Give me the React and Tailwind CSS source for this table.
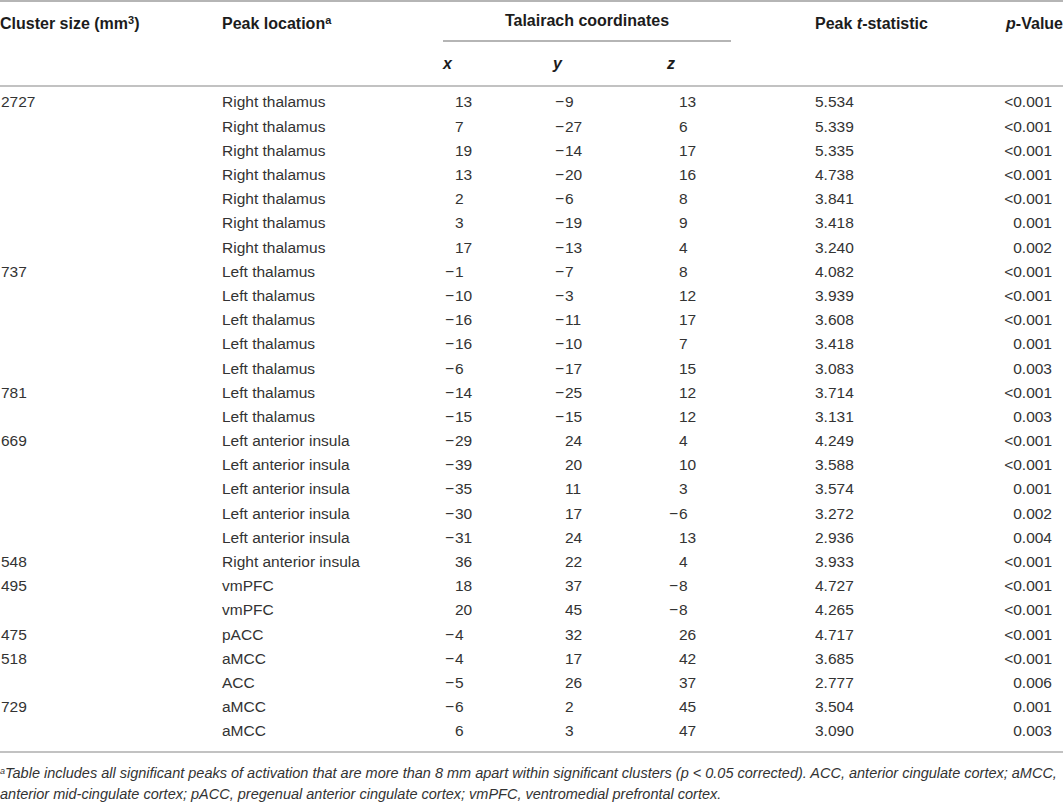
const rows = [
  ['2727', 'Right thalamus', '13', '−9', '13', '5.534', '<0.001'],
  ['', 'Right thalamus', '7', '−27', '6', '5.339', '<0.001'],
  ['', 'Right thalamus', '19', '−14', '17', '5.335', '<0.001'],
  ['', 'Right thalamus', '13', '−20', '16', '4.738', '<0.001'],
  ['', 'Right thalamus', '2', '−6', '8', '3.841', '<0.001'],
  ['', 'Right thalamus', '3', '−19', '9', '3.418', '0.001'],
  ['', 'Right thalamus', '17', '−13', '4', '3.240', '0.002'],
  ['737', 'Left thalamus', '−1', '−7', '8', '4.082', '<0.001'],
  ['', 'Left thalamus', '−10', '−3', '12', '3.939', '<0.001'],
  ['', 'Left thalamus', '−16', '−11', '17', '3.608', '<0.001'],
  ['', 'Left thalamus', '−16', '−10', '7', '3.418', '0.001'],
  ['', 'Left thalamus', '−6', '−17', '15', '3.083', '0.003'],
  ['781', 'Left thalamus', '−14', '−25', '12', '3.714', '<0.001'],
  ['', 'Left thalamus', '−15', '−15', '12', '3.131', '0.003'],
  ['669', 'Left anterior insula', '−29', '24', '4', '4.249', '<0.001'],
  ['', 'Left anterior insula', '−39', '20', '10', '3.588', '<0.001'],
  ['', 'Left anterior insula', '−35', '11', '3', '3.574', '0.001'],
  ['', 'Left anterior insula', '−30', '17', '−6', '3.272', '0.002'],
  ['', 'Left anterior insula', '−31', '24', '13', '2.936', '0.004'],
  ['548', 'Right anterior insula', '36', '22', '4', '3.933', '<0.001'],
  ['495', 'vmPFC', '18', '37', '−8', '4.727', '<0.001'],
  ['', 'vmPFC', '20', '45', '−8', '4.265', '<0.001'],
  ['475', 'pACC', '−4', '32', '26', '4.717', '<0.001'],
  ['518', 'aMCC', '−4', '17', '42', '3.685', '<0.001'],
  ['', 'ACC', '−5', '26', '37', '2.777', '0.006'],
  ['729', 'aMCC', '−6', '2', '45', '3.504', '0.001'],
  ['', 'aMCC', '6', '3', '47', '3.090', '0.003'],
];

const cols = 'grid grid-cols-[222px_221px_110px_114px_148px_147px_1fr]';

// minus sign hangs in a fixed slot so digits line up
function Coord({ v }) {
  const neg = v.startsWith('−');
  return (
    <span className="flex">
      <span className="w-[12px] text-right pr-[1px]">{neg ? '−' : ''}</span>
      <span>{neg ? v.slice(1) : v}</span>
    </span>
  );
}

export default function App() {
  return (
    <div className="w-[1063px] h-[804px] bg-white overflow-hidden text-[15.5px] text-[#333]" style={{ fontFamily: '"Liberation Sans", Arial, sans-serif' }}>
      <div className="border-t-2 border-[#b5b5b5]" />

      <div className={`${cols} grid-rows-[40px_43px] font-bold text-[16px] text-[#1c1c1c]`}>
        <div className="row-span-2 pt-[10px]">
          Cluster size (mm<sup className="text-[11px]">3</sup>)
        </div>
        <div className="row-span-2 pt-[10px]">
          Peak location<sup className="text-[11px]">a</sup>
        </div>
        <div className="col-span-3 flex flex-col">
          <div className="h-[38px] flex items-center justify-center w-[288px]">Talairach coordinates</div>
          <div className="w-[288px] border-t-2 border-[#b5b5b5]" />
        </div>
        <div className="row-span-2 pt-[10px]">
          Peak <i>t</i>-statistic
        </div>
        <div className="row-span-2 pt-[10px] text-right">
          <i>p</i>-Value
        </div>
        <div className="flex items-center italic">x</div>
        <div className="flex items-center italic">y</div>
        <div className="flex items-center italic">z</div>
      </div>

      <div className="border-t-2 border-[#c2c2c2]" />

      <div className="pt-[3px] pb-[8px]">
        {rows.map((r, i) => (
          <div key={i} className={`${cols} h-[24.2px] items-center`}>
            <div className="pl-[1px]">{r[0]}</div>
            <div>{r[1]}</div>
            <Coord v={r[2]} />
            <Coord v={r[3]} />
            <Coord v={r[4]} />
            <div>{r[5]}</div>
            <div className="text-right pr-[11px]">{r[6]}</div>
          </div>
        ))}
      </div>

      <div className="border-t-2 border-[#c2c2c2]" />

      <p className="mt-[10px] italic text-[14.5px] leading-[21px] text-[#333] whitespace-nowrap">
        <sup className="text-[9px]">a</sup>Table includes all significant peaks of activation that are more than 8 mm apart within significant clusters (p &lt; 0.05 corrected). ACC, anterior cingulate cortex; aMCC,
        <br />
        anterior mid-cingulate cortex; pACC, pregenual anterior cingulate cortex; vmPFC, ventromedial prefrontal cortex.
      </p>
    </div>
  );
}
